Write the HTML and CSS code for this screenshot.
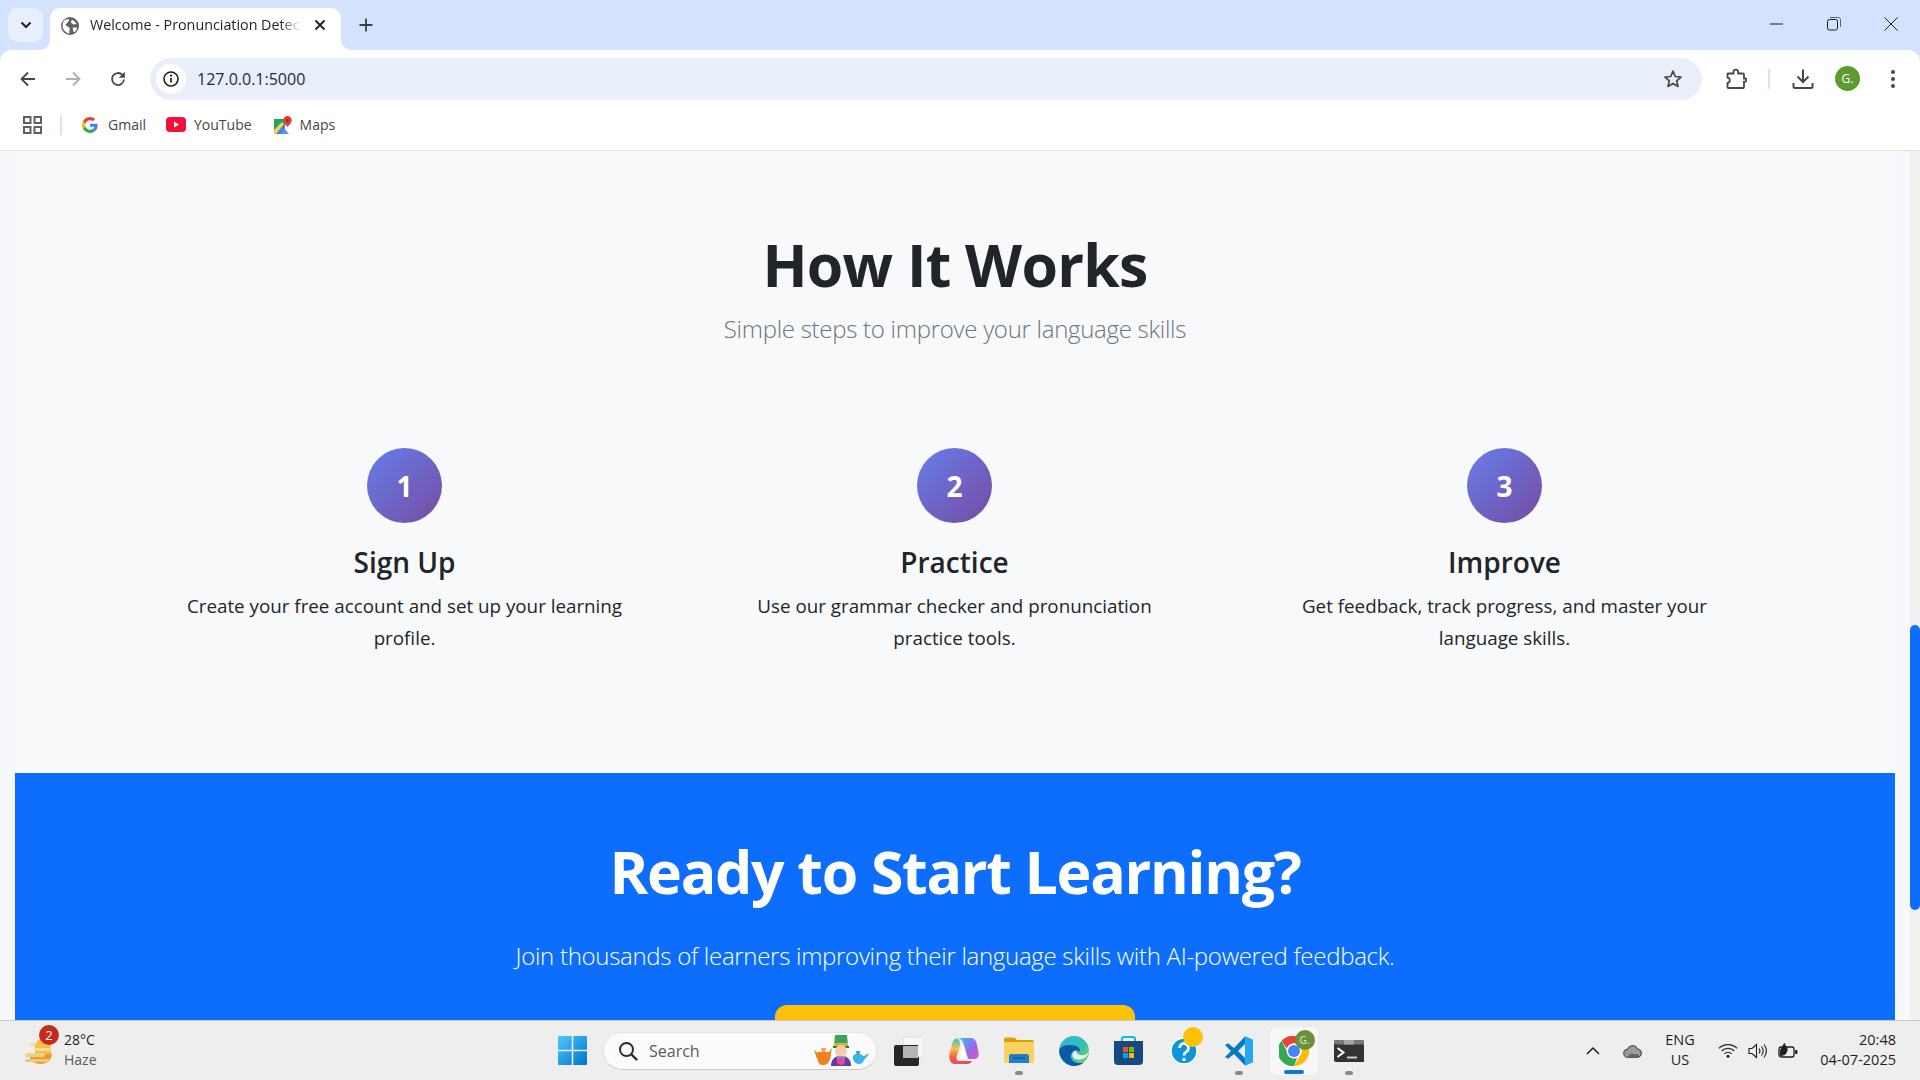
FILE: index.html
```html
<!DOCTYPE html>
<html lang="en">
<head>
<meta charset="utf-8">
<title>Welcome - Pronunciation Detection</title>
<link rel="stylesheet" href="styles.css">
</head>
<body>
<div class="window">
  <header class="tabstrip">
    <button class="tabsearch"><svg width="12" height="8" viewBox="0 0 12 8"><path d="M1.5 1.5 6 6l4.5-4.5" fill="none" stroke="#1f1f1f" stroke-width="2"/></svg></button>
    <div class="tab">
      <svg class="globe" width="18" height="18" viewBox="0 0 18 18"><circle cx="9" cy="9" r="9" fill="#5f6368"/><path d="M3 3.500C5 2 7 2 8 2.500c.5 1.500-1 2-1.500 3S4 7 5 8.500s3 1 3.500 2.500S8 14 8.500 16.500C5 16 2 13 1.500 9.500 1.500 7 2 5 3 3.500zM11 3c2 .5 3.500 2 4.500 4l-2.500.5c-1.500 0-1.500-1-2.500-1.500S10 4 11 3zM12 10.500h4c0 2-1 3.500-2.500 4.500-1 0-1.500-1-1.500-2s-.5-2 0-2.500z" fill="#fff"/></svg>
      <span class="tab-title">Welcome - Pronunciation Detection</span>
      <svg class="tab-close" width="12" height="12" viewBox="0 0 12 12"><path d="M1.500 1.500l9 9m0-9l-9 9" stroke="#1f1f1f" stroke-width="1.800"/></svg>
    </div>
    <svg class="newtab" width="14" height="14" viewBox="0 0 14 14"><path d="M7 .5v13M.5 7h13" stroke="#3c4043" stroke-width="1.800"/></svg>
    <div class="winctl">
      <svg width="14" height="14" viewBox="0 0 14 14"><path d="M0 7h13" stroke="#1f1f1f" stroke-width="1"/></svg>
      <svg width="14" height="14" viewBox="0 0 14 14"><rect x=".5" y="2.500" width="10" height="10.500" rx="2" fill="none" stroke="#1f1f1f"/><path d="M3 .5h8c1.500 0 2.500 1 2.500 2.500v7" fill="none" stroke="#5f6368"/></svg>
      <svg width="14" height="14" viewBox="0 0 14 14"><path d="M.5.5l13 13m0-13l-13 13" stroke="#1f1f1f" stroke-width="1"/></svg>
    </div>
  </header>

  <div class="toolbar">
    <button class="navbtn"><svg width="18" height="18" viewBox="0 0 18 18"><path d="M16 9H2.500M9 2.500 2.500 9 9 15.500" fill="none" stroke="#474747" stroke-width="1.800"/></svg></button>
    <button class="navbtn"><svg width="18" height="18" viewBox="0 0 18 18"><path d="M2 9h13.500M9 2.500 15.500 9 9 15.500" fill="none" stroke="#adadad" stroke-width="1.800"/></svg></button>
    <button class="navbtn"><svg width="18" height="18" viewBox="0 0 18 18"><path d="M15 9.500A6 6 0 1 1 13.300 4.800L15 6.500" fill="none" stroke="#474747" stroke-width="1.800"/><path d="M15.800 1.800v6h-6z" fill="#474747"/></svg></button>
    <div class="omnibox">
      <span class="siteinfo"><svg width="16" height="16" viewBox="0 0 16 16"><circle cx="8" cy="8" r="7" fill="none" stroke="#1f1f1f" stroke-width="1.600"/><path d="M8 7v4.500" stroke="#1f1f1f" stroke-width="1.700"/><circle cx="8" cy="4.700" r="1.100" fill="#1f1f1f"/></svg></span>
      <span class="url">127.0.0.1:5000</span>
      <svg class="star" width="20" height="20" viewBox="0 0 20 20"><path d="M10 2.200l2.300 5.300 5.700.5-4.300 3.800 1.300 5.600L10 14.500l-5 2.900 1.300-5.600L2 8l5.700-.5z" fill="none" stroke="#474747" stroke-width="1.700" stroke-linejoin="round"/></svg>
    </div>
    <svg class="tool ext" width="22" height="22" viewBox="0 0 22 22"><path d="M3 5.500h5.500V4a2.300 2.300 0 0 1 4.600 0v1.500H18c.6 0 1 .4 1 1v4h1a1.600 1.600 0 0 1 0 3.200h-1V19c0 .6-.4 1-1 1H3.500c-.6 0-1-.4-1-1v-4a2.800 2.800 0 0 0 0-5.500V6c0-.3.200-.5.500-.5z" fill="none" stroke="#474747" stroke-width="1.800"/></svg>
    <span class="toolsep"></span>
    <svg class="tool dl" width="22" height="22" viewBox="0 0 22 22"><path d="M11 1.500v12M5.500 8.500 11 14l5.500-5.500" fill="none" stroke="#474747" stroke-width="2"/><path d="M1.500 15v3.500c0 .8.500 1.500 1.500 1.500h16c1 0 1.500-.7 1.500-1.500V15" fill="none" stroke="#474747" stroke-width="2"/></svg>
    <span class="avatar">G.</span>
    <svg class="tool kebab" width="6" height="20" viewBox="0 0 6 20"><circle cx="3" cy="3" r="2" fill="#474747"/><circle cx="3" cy="10" r="2" fill="#474747"/><circle cx="3" cy="17" r="2" fill="#474747"/></svg>
  </div>

  <nav class="bookmarks">
    <svg class="apps" width="19" height="18" viewBox="0 0 19 18"><g fill="none" stroke="#5f5f5f" stroke-width="2"><rect x="1" y="1" width="6.500" height="6"/><rect x="11.500" y="1" width="6.500" height="6"/><rect x="1" y="11" width="6.500" height="6"/><rect x="11.500" y="11" width="6.500" height="6"/></g></svg>
    <span class="booksep"></span>
    <a class="bookmark gmail"><svg width="16" height="16" viewBox="0 0 48 48"><path fill="#EA4335" d="M24 9.500c3.500 0 6.700 1.300 9.100 3.500l6.800-6.800C35.800 2.400 30.200 0 24 0 14.600 0 6.500 5.400 2.600 13.200l7.900 6.200C12.400 13.700 17.700 9.500 24 9.500z"/><path fill="#4285F4" d="M47 24.500c0-1.600-.1-3.100-.4-4.500H24v9h12.900c-.6 3-2.300 5.500-4.800 7.200l7.700 6c4.500-4.200 7.200-10.400 7.200-17.700z"/><path fill="#FBBC05" d="M10.500 28.600A14.500 14.500 0 0 1 10.500 19.400l-7.900-6.200a24 24 0 0 0 0 21.600z"/><path fill="#34A853" d="M24 48c6.500 0 11.900-2.100 15.800-5.800l-7.700-6c-2.100 1.400-4.900 2.300-8.100 2.300-6.300 0-11.600-4.200-13.500-9.900l-7.900 6.200C6.500 42.600 14.600 48 24 48z"/></svg><span>Gmail</span></a>
    <a class="bookmark yt"><svg width="20" height="15" viewBox="0 0 20 15"><rect width="20" height="15" rx="4" fill="#f50f3a"/><path d="M8 4.500v6l5-3z" fill="#fff"/></svg><span>YouTube</span></a>
    <a class="bookmark maps"><svg width="18" height="18" viewBox="0 0 18 18"><path d="M0 3h11v15H0z" fill="#1fa463"/><path d="M0 18 11 7v11z" fill="#4285f4"/><path d="M0 14 8 6l2 2L2 18H0z" fill="#fbd34a"/><path d="M7 18l4-5 4 5z" fill="#5b9df5"/><path d="M13.500 0a4.300 4.300 0 0 1 4.300 4.300c0 3-4.300 6.700-4.300 6.700S9.200 7.300 9.200 4.300A4.300 4.300 0 0 1 13.500 0z" fill="#e04436"/><circle cx="13.500" cy="4.300" r="1.500" fill="#8a2b20"/></svg><span>Maps</span></a>
  </nav>

  <main class="page">
    <div class="viewport">
      <section class="how">
        <h2 class="how-title">How It Works</h2>
        <p class="how-sub">Simple steps to improve your language skills</p>
        <div class="steps">
          <article class="step">
            <div class="num">1</div>
            <h3>Sign Up</h3>
            <p>Create your free account and set up your learning profile.</p>
          </article>
          <article class="step">
            <div class="num">2</div>
            <h3>Practice</h3>
            <p>Use our grammar checker and pronunciation practice tools.</p>
          </article>
          <article class="step">
            <div class="num">3</div>
            <h3>Improve</h3>
            <p>Get feedback, track progress, and master your language skills.</p>
          </article>
        </div>
      </section>
      <section class="cta">
        <h2>Ready to Start Learning?</h2>
        <p>Join thousands of learners improving their language skills with AI-powered feedback.</p>
        <a class="cta-btn"></a>
      </section>
    </div>
    <div class="scrollbar"><div class="thumb"></div></div>
  </main>

  <footer class="taskbar">
    <div class="weather">
      <span class="wicon">
        <svg width="30" height="26" viewBox="0 0 30 26"><path d="M4 14h23c-.5 6-5 10-11.500 10S4.500 20 4 14z" fill="#f39a1f"/><path d="M10 7a8 8 0 0 1 16 0v7H10z" fill="#f7bd4a"/><g fill="#f6dc9a"><rect x="5" y="3" width="6" height="3" rx="1.500"/><rect x="10" y="8" width="16" height="3" rx="1.500"/><rect x="0" y="13" width="20" height="4" rx="2" fill="#eccf8f"/><rect x="0" y="19" width="25" height="3" rx="1.500" fill="#e8c98a"/></g></svg>
        <b class="wbadge">2</b>
      </span>
      <span class="wtext"><span>28°C</span><span class="haze">Haze</span></span>
    </div>
    <div class="tile start"><svg width="29" height="29" viewBox="0 0 29 29"><defs><linearGradient id="win" x1="0" y1="0" x2="1" y2="1"><stop offset="0" stop-color="#4fc8f8"/><stop offset="1" stop-color="#0073d0"/></linearGradient></defs><path fill="url(#win)" d="M1 0h12.700v13.700H0V1a1 1 0 0 1 1-1zM15.300 0H28a1 1 0 0 1 1 1v12.700H15.300zM0 15.300h13.700V29H1a1 1 0 0 1-1-1zM15.300 15.300H29V28a1 1 0 0 1-1 1H15.300z"/></svg></div>
    <div class="search">
      <svg width="20" height="20" viewBox="0 0 20 20"><circle cx="8.500" cy="8.500" r="6.500" fill="none" stroke="#2b2b2b" stroke-width="2"/><path d="M13.500 13.500 18.500 18.500" stroke="#2b2b2b" stroke-width="2.400" stroke-linecap="round"/></svg>
      <span class="search-label">Search</span>
      <svg class="mascot" width="56" height="31" viewBox="0 0 56 31"><path d="M4 17h11l3-4-1 5c0 7-3 12-7 12H8c-3 0-5-5-5-9z" fill="#f0811c"/><path d="M0 15l4 3-1 6z" fill="#f0811c"/><path d="M7 13h5l-1 4H8z" fill="#f9a23d"/><path d="M19 11h16v2H19z" fill="#1a7a4a"/><path d="M21 0h12l1 11H20z" fill="#3aa55c"/><path d="M20 8h14v3H20z" fill="#d9b23a"/><circle cx="27" cy="16" r="6" fill="#f6cda4"/><path d="M17 31c0-7 4-10 10-10s10 3 10 10z" fill="#5a3fa8"/><path d="M23 21h8v4h-8z" fill="#4bb6ea"/><circle cx="27" cy="26" r="4" fill="#e8488c"/><path d="M39 21c2-3 8-3 10 0 2 0 4-2 6-3-1 3-3 5-5 7-1 3-3 4-5 4-3 0-5-2-6-5z" fill="#38b6e8"/><path d="M42 16h4l-1 4h-2z" fill="#2a97d0"/></svg>
    </div>
    <div class="tile"><svg width="30" height="30" viewBox="0 0 30 30"><rect x="9" y="1" width="21" height="20" rx="2" fill="#f6f6f6" stroke="#e0e0e0"/><path d="M2 9h22v1H9v11h16v7a2 2 0 0 1-2 2H2a2 2 0 0 1-2-2V11a2 2 0 0 1 2-2z" fill="#262626"/><rect x="9" y="10" width="15" height="12" fill="#b5b5b5"/></svg></div>
    <div class="tile"><svg width="30" height="26" viewBox="0 0 30 26"><defs><linearGradient id="cp1" x1="0" y1="0" x2="1" y2="1"><stop offset="0" stop-color="#3ec3ee"/><stop offset=".55" stop-color="#8f6cf0"/><stop offset="1" stop-color="#e84fb0"/></linearGradient><linearGradient id="cp2" x1="0" y1="0" x2="0" y2="1"><stop offset="0" stop-color="#2cc4d8"/><stop offset=".4" stop-color="#f7c23c"/><stop offset=".75" stop-color="#f0603a"/><stop offset="1" stop-color="#e84a6c"/></linearGradient></defs><path d="M9 0h13c3 0 4.500 2 5.500 5l2 9c1 4-1 7-5 7h-8l-2-15c-.5-3-2-5-5.500-6z" fill="url(#cp1)"/><path d="M8 .5C5 .5 4 3 3 6L.5 16c-1 5 1 10 5 10h13c2 0 3.500-1 4.500-3H10c-2 0-3-2-2.500-4L11 7c.5-3-1-6-3-6.500z" fill="url(#cp2)"/><path d="M13 7h2l4 14h-8z" fill="#fff"/></svg></div>
    <div class="tile running"><svg width="30" height="27" viewBox="0 0 30 27"><path d="M0 2a1.500 1.500 0 0 1 1.500-1.500h9L13 3h15.500A1.500 1.500 0 0 1 30 4.500V8H0z" fill="#d9a206"/><path d="M0 5h30v21H0z" fill="#fbd35c"/><path d="M5 19a2 2 0 0 1 2-2h16a2 2 0 0 1 2 2v7H5z" fill="#1f7fc9"/><path d="M9 21h12" stroke="#0e5b98" stroke-width="1.500"/></svg></div>
    <div class="tile"><svg width="30" height="30" viewBox="0 0 30 30"><defs><linearGradient id="edge1" x1="0" y1="0" x2="1" y2="1"><stop offset="0" stop-color="#2fb3e4"/><stop offset=".55" stop-color="#35c1b0"/><stop offset="1" stop-color="#7fdc5a"/></linearGradient></defs><circle cx="15" cy="15" r="15" fill="url(#edge1)"/><path d="M.2 15C1 23 7.500 30 15 30c4 0 7.500-1.500 9.500-3.500-5 1.500-11 0-12.500-4.500-1-3.500 1-7 4.500-7.500 3.300-.5 4.500 1.500 4.500 1.500s1-4-4-6C10 8 1 9 .2 15z" fill="#0c59a4"/><path d="M17 14.500a4.500 4.500 0 0 0-2 8c3 2 9 1 12-1.500 1.500-1.500 3-4 3-6-1 3-5 5-9 4-2.500-.5-3.800-2.500-4-4.500z" fill="#eeeeee"/></svg></div>
    <div class="tile"><svg width="29" height="29" viewBox="0 0 29 29"><path d="M8 6V2.500C8 1.500 9 1 10 1h9c1 0 2 .5 2 1.500V6" fill="none" stroke="#1ab6ea" stroke-width="2"/><path d="M0 5h29v20a4 4 0 0 1-4 4H4a4 4 0 0 1-4-4z" fill="#15497f"/><rect x="9" y="11" width="5" height="5" fill="#f25022"/><rect x="15" y="11" width="5" height="5" fill="#7fba00"/><rect x="9" y="17" width="5" height="5" fill="#00a4ef"/><rect x="15" y="17" width="5" height="5" fill="#ffb900"/></svg></div>
    <div class="tile help"><svg width="28" height="28" viewBox="0 0 28 28"><circle cx="14" cy="14" r="13" fill="#0a97d9" stroke="#fff" stroke-width="1.500"/><path d="M9.500 11a4.500 4.500 0 1 1 7 3.700c-1.600 1.100-2.500 1.800-2.500 3.800" fill="none" stroke="#fff" stroke-width="2.800"/><circle cx="14" cy="22.500" r="1.800" fill="#fff"/></svg><b class="helpbadge"></b></div>
    <div class="tile running"><svg width="30" height="30" viewBox="0 0 30 30"><path d="M21 .5 29 4v22l-8 3.500L10 18l-6 4.800L1 21l6-6-6-6 3-1.800L10 12z" fill="#0a78c4"/><path d="M21 .5 29 4v22l-8 3.500z" fill="#25a8f0"/><path d="M21 8v14l-7-7z" fill="#eeeeee"/></svg></div>
    <div class="tile active"><svg width="30" height="30" viewBox="0 0 30 30"><path d="M15 0a15 15 0 0 1 13 7.500H15a7.500 7.500 0 0 0-7 5L2.500 5A15 15 0 0 1 15 0z" fill="#ea4335"/><path d="M28 7.500A15 15 0 0 1 15 30l6.500-11.300A7.500 7.500 0 0 0 20.200 9.600z" fill="#fbbc05"/><path d="M15 30A15 15 0 0 1 2.500 5l6 11A7.500 7.500 0 0 0 18 22z" fill="#34a853"/><circle cx="15" cy="15" r="7.500" fill="#fff"/><circle cx="15" cy="15" r="6" fill="#4285f4"/></svg><b class="chromebadge">G.</b></div>
    <div class="tile running"><svg width="30" height="22" viewBox="0 0 30 22"><path d="M2 0h26a2 2 0 0 1 2 2v20H2a2 2 0 0 1-2-2V2a2 2 0 0 1 2-2z" fill="#333"/><path d="M0 2a2 2 0 0 1 2-2h26a2 2 0 0 1 2 2v2.500H0z" fill="#777"/><path d="M10 0h10v4.500H10z" fill="#a5a5a5"/><path d="M3.500 8l6 4.500-6 4.500" fill="none" stroke="#fff" stroke-width="2"/><path d="M13 17.500h10" stroke="#ccc" stroke-width="2"/></svg></div>
    <div class="tray">
      <svg class="tr-chev" width="14" height="8" viewBox="0 0 14 8"><path d="M1 7l6-6 6 6" fill="none" stroke="#1f1f1f" stroke-width="1.500"/></svg>
      <svg class="tr-cloud" width="20" height="14" viewBox="0 0 20 14"><path d="M5 13.300a4 4 0 0 1-.5-8A5.500 5.500 0 0 1 14.800 5a4.200 4.200 0 0 1 .2 8.300z" fill="#9b9b9b" stroke="#333" stroke-width="1"/><path d="M5 13.300c.5-3 4-5 6-3 2-1 6 0 5 3z" fill="#666"/></svg>
      <div class="lang"><span>ENG</span><span>US</span></div>
      <svg class="tr-wifi" width="20" height="15" viewBox="0 0 20 15"><g fill="none" stroke="#1f1f1f" stroke-width="1.200"><path d="M.8 5.300c5-5 13.400-5 18.400 0"/><path d="M3.700 8c3.500-3.400 9.100-3.400 12.600 0"/><path d="M6.500 10.800c2-1.900 5-1.900 7 0"/></g><circle cx="10" cy="13.300" r="1.500" fill="#1f1f1f"/></svg>
      <svg class="tr-vol" width="20" height="16" viewBox="0 0 20 16"><path d="M1 5.500h3L8.500 1.500v13L4 10.500H1z" fill="none" stroke="#1f1f1f" stroke-width="1.100"/><g fill="none" stroke="#1f1f1f" stroke-width="1.100"><path d="M11 5.500c1.200 1.500 1.200 3.500 0 5"/><path d="M13.500 3.500c2 2.700 2 6.300 0 9"/><path d="M16 1.500c3 4 3 9 0 13"/></g></svg>
      <svg class="tr-bat" width="20" height="17" viewBox="0 0 20 17"><rect x="1" y="5" width="15" height="10" rx="2" fill="none" stroke="#1f1f1f" stroke-width="1.300"/><rect x="17" y="8" width="2.500" height="4" rx="1" fill="#1f1f1f"/><path d="M2 10c0-4 2-4 3-7 1-2 2-2 2-2s0 2 1 3c2 2 2 4 1 6-1 3-4 4-7 4z" fill="#1f1f1f"/></svg>
      <div class="clock"><span>20:48</span><span>04-07-2025</span></div>
    </div>
  </footer>
</div>
</body>
</html>
```
FILE: styles.css
```css
* { box-sizing: border-box; }
html, body { margin: 0; height: 100%; overflow: hidden; }
body { font-family: "Open Sans", "Noto Sans", "Liberation Sans", sans-serif; color: #212529; }
button { border: 0; background: none; padding: 0; }
svg { display: block; flex: none; }

.window { height: 1080px; display: flex; flex-direction: column; background: #d3e3fd; }

/* Tab strip */
.tabstrip { height: 50px; flex: none; display: flex; align-items: flex-start; position: relative; }
.tabsearch { width: 35px; height: 34px; margin: 8px 0 0 8px; border-radius: 10px; background: #e9f0fd; display: flex; align-items: center; justify-content: center; }
.tab { width: 291px; height: 42px; margin: 8px 0 0 7px; padding-left: 11px; background: #fff; border-radius: 10px 10px 0 0; display: flex; align-items: flex-start; position: relative; }
.tab::before, .tab::after { content: ""; position: absolute; bottom: 0; width: 10px; height: 10px; }
.tab::before { left: -10px; background: radial-gradient(circle at 0 0, transparent 9.500px, #fff 10px); }
.tab::after { right: -10px; background: radial-gradient(circle at 100% 0, transparent 9.500px, #fff 10px); }
.globe { margin-top: 9px; }
.tab-title { width: 211px; margin: 7px 0 0 11px; font-size: 14.300px; line-height: 20px; color: #1f1f1f; white-space: nowrap; overflow: hidden; -webkit-mask-image: linear-gradient(90deg, #000 90%, transparent); mask-image: linear-gradient(90deg, #000 90%, transparent); }
.tab-close { margin: 11px 0 0 13px; }
.newtab { margin: 18px 0 0 18px; }
.winctl { margin-left: auto; display: flex; gap: 43px; padding: 17px 22px 0 0; }

/* Toolbar */
.toolbar { height: 50px; flex: none; background: #fff; border-radius: 12px 12px 0 0; display: flex; align-items: center; padding-left: 5px; }
.navbtn { width: 45px; height: 42px; display: flex; align-items: center; justify-content: center; margin-top: 8px; }
.omnibox { width: 1552px; height: 42px; margin: 8px 0 0 10px; background: #e9eff9; border-radius: 21px; display: flex; align-items: center; padding: 0 19px 0 6px; }
.siteinfo { width: 30px; height: 30px; background: #fff; border-radius: 50%; display: flex; align-items: center; justify-content: center; }
.url { margin-left: 11px; font-size: 16px; color: #1f2a37; }
.star { margin-left: auto; }
.tool { margin-top: 8px; }
.ext { margin-left: 23px; }
.toolsep { width: 2px; height: 20px; background: #d3e3fd; margin: 8px 0 0 21px; }
.dl { margin-left: 22px; }
.avatar { width: 25px; height: 25px; margin: 7px 0 0 21px; border-radius: 50%; background: #5e9b2f; color: #fff; font-size: 12px; display: flex; align-items: center; justify-content: center; }
.kebab { margin-left: 30px; }

/* Bookmarks */
.bookmarks { height: 51px; flex: none; background: #fff; border-bottom: 1px solid #e2e3e5; display: flex; align-items: center; padding: 0 0 1px 23px; font-size: 14px; color: #444746; }
.booksep { width: 2px; height: 20px; background: #d3e3fd; margin-left: 18px; }
.bookmark { display: flex; align-items: center; }
.gmail { margin-left: 20px; gap: 10px; }
.yt { margin-left: 20px; gap: 8px; }
.maps { margin-left: 22px; gap: 8px; }

/* Page */
.page { flex: 1; min-height: 0; display: flex; background: #f6f8fc; }
.viewport { flex: 1; padding: 0 15px; overflow: hidden; }
.scrollbar { width: 10px; background: #f1f1f1; padding-top: 474px; }
.thumb { height: 285px; background: #0d6efd; border-radius: 5px; }

.how { height: 622px; background: #f8f9fa; padding-top: 78px; text-align: center; }
.how-title { margin: 0; font-size: 59px; line-height: 1.2; font-weight: 700; letter-spacing: -.75px; color: #212529; }
.how-sub { margin: 11px 0 0; font-size: 24px; line-height: 1.5; font-weight: 300; letter-spacing: -.28px; color: #6c757d; }
.steps { display: grid; grid-template-columns: repeat(3, 550px); justify-content: center; margin-top: 101px; }
.step { padding: 0 55px 0 54px; }
.num { width: 75px; height: 75px; margin: 0 auto; padding-top: 2px; border-radius: 50%; background: linear-gradient(135deg, #667eea, #764ba2); color: #fff; font-size: 28px; font-weight: 700; display: flex; align-items: center; justify-content: center; }
.step h3 { margin: 23px 0 11px; font-size: 28px; line-height: 1.2; font-weight: 600; color: #212529; }
.step p { margin: 0; font-size: 18.800px; line-height: 32px; color: #212529; }

.cta { background: #0d6efd; text-align: center; color: #fff; padding-top: 63px; height: 300px; }
.cta h2 { margin: 0; font-size: 59px; line-height: 1.2; font-weight: 700; letter-spacing: -1.300px; }
.cta p { margin: 31px 0 0; font-size: 24px; line-height: 1.5; font-weight: 300; letter-spacing: -.29px; }
.cta-btn { display: block; width: 360px; height: 60px; margin: 31px auto 0; background: #ffc107; border-radius: 12px; }

/* Taskbar */
.taskbar { height: 60px; flex: none; background: #eeeeee; border-top: 1px solid #c9c9c9; display: flex; align-items: center; font-size: 14px; color: #1f1f1f; }
.weather { width: 545px; padding-left: 25px; display: flex; align-items: center; gap: 9px; }
.wicon { position: relative; width: 30px; height: 26px; display: block; margin-top: 4px; }
.wbadge { position: absolute; left: 14px; top: -15px; width: 20px; height: 20px; border-radius: 50%; background: #c42b1c; color: #fff; font-size: 13px; font-weight: 400; line-height: 20px; text-align: center; }
.wtext { display: flex; flex-direction: column; font-size: 14px; line-height: 20px; margin-top: -2px; }
.haze { color: #5a5a5a; }
.tile { width: 55px; height: 48px; display: flex; align-items: center; justify-content: center; position: relative; }
.running::after, .active::after { content: ""; position: absolute; bottom: 0; left: 50%; width: 8px; height: 4px; margin-left: -4px; border-radius: 2px; background: #8a8a8a; }
.start { margin-right: 3px; }
.search { width: 274px; height: 38px; margin-right: 4px; background: #fbfbfb; border: 1px solid #e5e5e5; border-bottom-color: #c9c9c9; border-radius: 19px; display: flex; align-items: center; padding: 0 6px 0 14px; }
.search-label { margin-left: 11px; font-size: 16px; color: #5a5a5a; }
.mascot { margin-left: auto; }
.help .helpbadge { position: absolute; right: 8px; top: 0; width: 20px; height: 20px; border-radius: 50%; background: #ffc107; }
.active { width: 48px; margin: 0 3.500px; background: #f7f7f7; border-radius: 5px; box-shadow: 0 0 1px #cfcfcf; }
.active::after { width: 20px; margin-left: -10px; height: 4px; background: #0a78d4; bottom: 1px; }
.chromebadge { position: absolute; right: 3px; top: 3px; width: 20px; height: 20px; border-radius: 50%; background: #69913a; color: #e6efd9; font-size: 10px; font-weight: 400; line-height: 20px; text-align: center; }
.tray { flex: 1; display: flex; align-items: center; padding-left: 210px; }
.lang { width: 40px; margin-left: 17px; display: flex; flex-direction: column; align-items: center; font-size: 14.500px; line-height: 20px; margin-top: -2px; }
.tr-cloud { margin-left: 23px; }
.tr-wifi { margin-left: 18px; }
.tr-vol { margin-left: 10px; }
.tr-bat { margin-left: 10px; }
.clock { margin-left: auto; padding-right: 24px; display: flex; flex-direction: column; align-items: flex-end; font-size: 14.500px; line-height: 20px; margin-top: -2px; }
```
